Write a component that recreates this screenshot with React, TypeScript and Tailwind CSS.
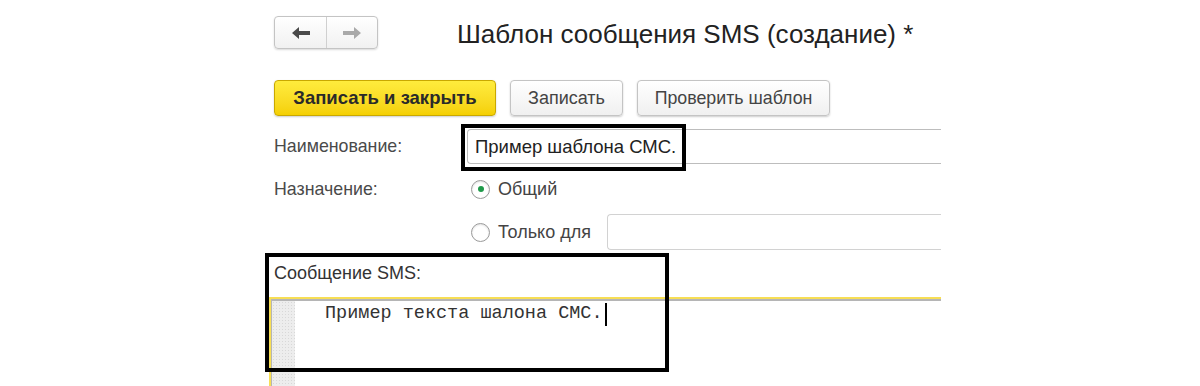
import React from "react";

function ArrowIcon({ dir, color }: { dir: "left" | "right"; color: string }) {
  return (
    <svg width="20" height="14" viewBox="0 0 20 14" className={dir === "right" ? "rotate-180" : ""}>
      <path d="M1 7 L8 1 L8 5 L19 5 L19 9 L8 9 L8 13 Z" fill={color} />
    </svg>
  );
}

function Radio({ checked }: { checked?: boolean }) {
  return (
    <span className="flex h-[19px] w-[19px] items-center justify-center rounded-full border border-[#9a9a9a] bg-white shadow-[inset_0_1px_2px_rgba(0,0,0,0.12)]">
      {checked && <span className="h-[6px] w-[6px] rounded-full bg-[#1f9a4a]" />}
    </span>
  );
}

export default function App() {
  const sans = { fontFamily: '"Liberation Sans", Arial, sans-serif' };
  return (
    <div className="relative h-[386px] w-[1200px] overflow-hidden bg-white text-[#333]" style={sans}>
      <div className="w-[941px] overflow-hidden pl-[274px]">
        {/* header */}
        <div className="flex h-[80px] items-start pt-[16px]">
          <div className="flex h-[33px] w-[104px] overflow-hidden rounded-[4px] border border-[#c4c4c4] bg-gradient-to-b from-white to-[#f1f1f1] shadow-[0_1px_2px_rgba(0,0,0,0.15)]">
            <div className="flex w-[52px] items-center justify-center border-r border-[#d0d0d0]">
              <ArrowIcon dir="left" color="#4a4a4a" />
            </div>
            <div className="flex flex-1 items-center justify-center">
              <ArrowIcon dir="right" color="#a9a9a9" />
            </div>
          </div>
          <h1 className="ml-[79px] mt-[2px] text-[26px] leading-[32px] text-[#222]">
            Шаблон сообщения SMS (создание) *
          </h1>
        </div>

        {/* command bar */}
        <div className="flex h-[36px] gap-[14px]">
          <button className="w-[222px] rounded-[4px] border border-[#c9a800] bg-gradient-to-b from-[#ffec3c] to-[#f5d000] text-[18.5px] font-bold text-[#2a2a2a] shadow-[0_1px_2px_rgba(0,0,0,0.2)]">
            Записать и закрыть
          </button>
          <button className="w-[113px] rounded-[4px] border border-[#c4c4c4] bg-gradient-to-b from-white to-[#f0f0f0] text-[18px] text-[#444] shadow-[0_1px_2px_rgba(0,0,0,0.2)]">
            Записать
          </button>
          <button className="w-[193px] rounded-[4px] border border-[#c4c4c4] bg-gradient-to-b from-white to-[#f0f0f0] text-[17.8px] text-[#444] shadow-[0_1px_2px_rgba(0,0,0,0.2)]">
            Проверить шаблон
          </button>
        </div>

        {/* Наименование */}
        <div className="mt-[13px] flex h-[35px] items-center">
          <span className="w-[193px] text-[17.8px] text-[#4a4a4a]">Наименование:</span>
          <div className="flex h-[35px] flex-1 items-center rounded-l-[4px] border border-r-0 border-[#bdbdbd] pl-[7px] text-[18.5px] text-[#222]">
            Пример шаблона СМС.
          </div>
        </div>

        {/* Назначение */}
        <div className="mt-[10px] flex h-[30px] items-center">
          <span className="w-[197px] text-[17.8px] text-[#4a4a4a]">Назначение:</span>
          <Radio checked />
          <span className="ml-[8px] text-[18px] text-[#444]">Общий</span>
        </div>

        <div className="mt-[10px] flex h-[36px] items-center pl-[197px]">
          <Radio />
          <span className="ml-[8px] text-[18px] text-[#444]">Только для</span>
          <div className="ml-[16px] h-[36px] flex-1 rounded-l-[4px] border border-r-0 border-[#d2d2d2]" />
        </div>

        {/* Сообщение SMS */}
        <div className="mt-[12px] flex h-[22px] items-center text-[18px] text-[#333]">Сообщение SMS:</div>
      </div>

      <div className="ml-[269px] mt-[13px] h-[100px] w-[672px] border-l-2 border-t-2 border-[#f7de55]">
        <div className="flex h-full border-l border-t-2 border-[#b5b5b5]">
          <div className="w-[23px] bg-[#ededed] bg-[radial-gradient(#d8d8d8_1px,transparent_1px)] bg-[length:3px_3px]" />
          <div className="flex items-start pl-[30px] pt-[2px] text-[18.5px] leading-[22px] text-[#333]" style={{ fontFamily: '"Liberation Mono", "Courier New", monospace' }}>
            Пример текста шалона СМС.
            <span className="ml-[2px] mt-[0px] h-[23px] w-[2px] bg-black" />
          </div>
        </div>
      </div>

      {/* annotation frames */}
      <div className="pointer-events-none absolute left-[461px] top-[124px] h-[47px] w-[225px] border-[4px] border-black" />
      <div className="pointer-events-none absolute left-[265px] top-[253px] h-[119px] w-[404px] border-[4px] border-black" />
    </div>
  );
}
